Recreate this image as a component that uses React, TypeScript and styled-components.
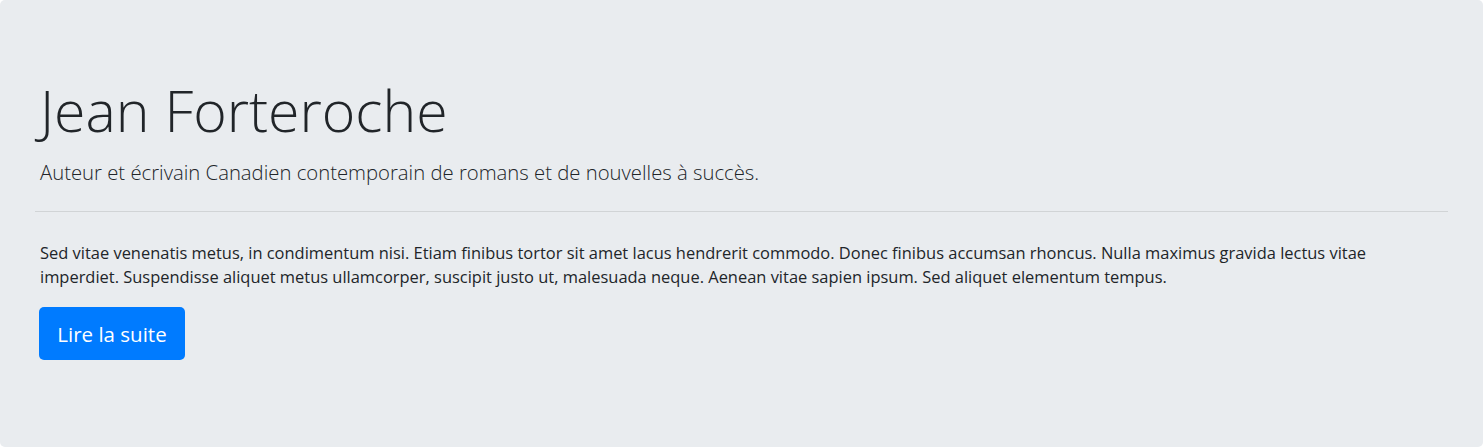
import styled, { createGlobalStyle } from "styled-components";

const GlobalStyle = createGlobalStyle`
  html, body {
    margin: 0;
    padding: 0;
    background: #ffffff;
  }
  body {
    font-family: "Open Sans", "Noto Sans", "Liberation Sans", sans-serif;
    color: #212529;
  }
  * {
    box-sizing: border-box;
  }
`;

const Jumbotron = styled.section`
  height: 447px;
  padding: 75px 35px 0;
  background-color: #e9ecef;
  border-radius: 5px;
  display: flex;
  flex-direction: column;
  align-items: flex-start;
`;

const Title = styled.h1`
  margin: 0 0 12px 5px;
  font-size: 57.2px;
  font-weight: 300;
  line-height: 70px;
  color: #212529;
`;

const Lead = styled.p`
  margin: 0 0 24px 5px;
  font-size: 20.3px;
  font-weight: 300;
  line-height: 30px;
`;

const Divider = styled.hr`
  align-self: stretch;
  margin: 0;
  border: 0;
  border-top: 1px solid rgba(0, 0, 0, 0.1);
`;

const Text = styled.p`
  margin: 29px 0 18px 5px;
  max-width: 1390px;
  font-size: 16.45px;
  font-weight: 400;
  line-height: 24px;
`;

const Button = styled.a`
  display: inline-flex;
  align-items: center;
  justify-content: center;
  height: 53px;
  width: 146px;
  margin-left: 4px;
  border-radius: 5px;
  background-color: #007bff;
  color: #ffffff;
  font-size: 20.5px;
  line-height: 30px;
  text-decoration: none;
  cursor: pointer;
`;

export default function App() {
  return (
    <>
      <GlobalStyle />
      <Jumbotron>
        <Title>Jean Forteroche</Title>
        <Lead>
          Auteur et écrivain Canadien contemporain de romans et de nouvelles à
          succès.
        </Lead>
        <Divider />
        <Text>
          Sed vitae venenatis metus, in condimentum nisi. Etiam finibus tortor
          sit amet lacus hendrerit commodo. Donec finibus accumsan rhoncus.
          Nulla maximus gravida lectus vitae imperdiet. Suspendisse aliquet
          metus ullamcorper, suscipit justo ut, malesuada neque. Aenean vitae
          sapien ipsum. Sed aliquet elementum tempus.
        </Text>
        <Button href="#">Lire la suite</Button>
      </Jumbotron>
    </>
  );
}
